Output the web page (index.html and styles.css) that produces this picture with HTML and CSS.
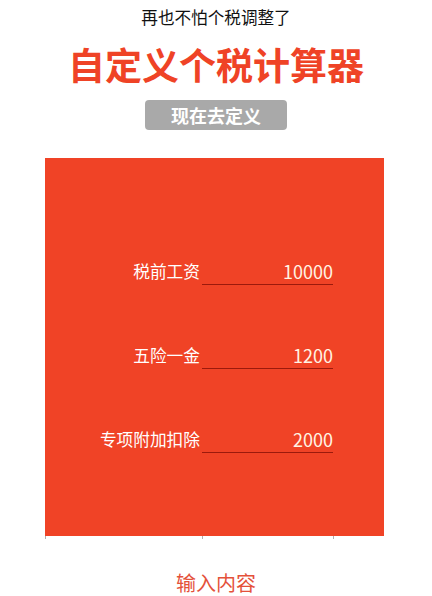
FILE: index.html
```html
<!DOCTYPE html>
<html lang="zh-CN">
<head>
<meta charset="utf-8">
<title>自定义个税计算器</title>
<link rel="stylesheet" href="styles.css">
</head>
<body>
<div class="page">
  <div class="subtitle">再也不怕个税调整了</div>
  <h1 class="title">自定义个税计算器</h1>
  <div class="btn-wrap"><button class="btn">现在去定义</button></div>
  <div class="panel">
    <div class="row">
      <div class="label">税前工资</div>
      <div class="field">10000</div>
    </div>
    <div class="row">
      <div class="label">五险一金</div>
      <div class="field">1200</div>
    </div>
    <div class="row">
      <div class="label">专项附加扣除</div>
      <div class="field">2000</div>
    </div>
  </div>
  <div class="ticks">
    <div class="tick-seg seg1"></div>
    <div class="tick-seg seg2"></div>
    <div class="tick-seg seg3"></div>
  </div>
  <div class="hint">输入内容</div>
</div>
</body>
</html>
```

FILE: styles.css
```css
html, body {
  margin: 0;
  padding: 0;
  background: #ffffff;
}
body {
  font-family: "Noto Sans CJK SC", "Noto Sans", sans-serif;
  width: 432px;
}
.page {
  display: flex;
  flex-direction: column;
  align-items: stretch;
}
.subtitle {
  margin-top: 7px;
  font-size: 16.6px;
  line-height: 20px;
  text-align: center;
  color: #111111;
}
.title {
  margin: 15px 0 0 0;
  font-size: 37px;
  line-height: 44px;
  font-weight: 700;
  text-align: center;
  color: #ef4326;
}
.btn-wrap {
  margin-top: 14px;
  display: flex;
  justify-content: center;
}
.btn {
  width: 142px;
  height: 30px;
  border: none;
  border-radius: 4px;
  background: #a9a9a9;
  color: #ffffff;
  font-family: "Noto Sans CJK SC", sans-serif;
  font-size: 18px;
  font-weight: 700;
  line-height: 30px;
  padding: 0;
}
.panel {
  margin: 28px 0 0 45px;
  width: 339px;
  height: 378px;
  box-sizing: border-box;
  background: #f04326;
  padding-top: 102px;
  display: flex;
  flex-direction: column;
  gap: 59px;
}
.row {
  display: flex;
  align-items: flex-end;
  height: 25px;
}
.label {
  width: 155px;
  text-align: right;
  color: #ffffff;
  font-size: 16.7px;
  line-height: 24px;
  margin-bottom: 2px;
}
.field {
  margin-left: 2px;
  width: 131px;
  height: 24px;
  border-bottom: 1px solid #9c1a0c;
  text-align: right;
  color: #fff4e4;
  font-size: 18px;
  line-height: 22px;
}
.ticks {
  display: flex;
  margin-left: 45px;
  height: 3px;
}
.tick-seg {
  border-left: 1px solid #b0b0b0;
  box-sizing: border-box;
}
.seg1 { width: 157px; }
.seg2 { width: 131px; }
.seg3 { width: 1px; }
.hint {
  margin-top: 30px;
  text-align: center;
  font-size: 20px;
  line-height: 28px;
  color: #e4513a;
}
```
